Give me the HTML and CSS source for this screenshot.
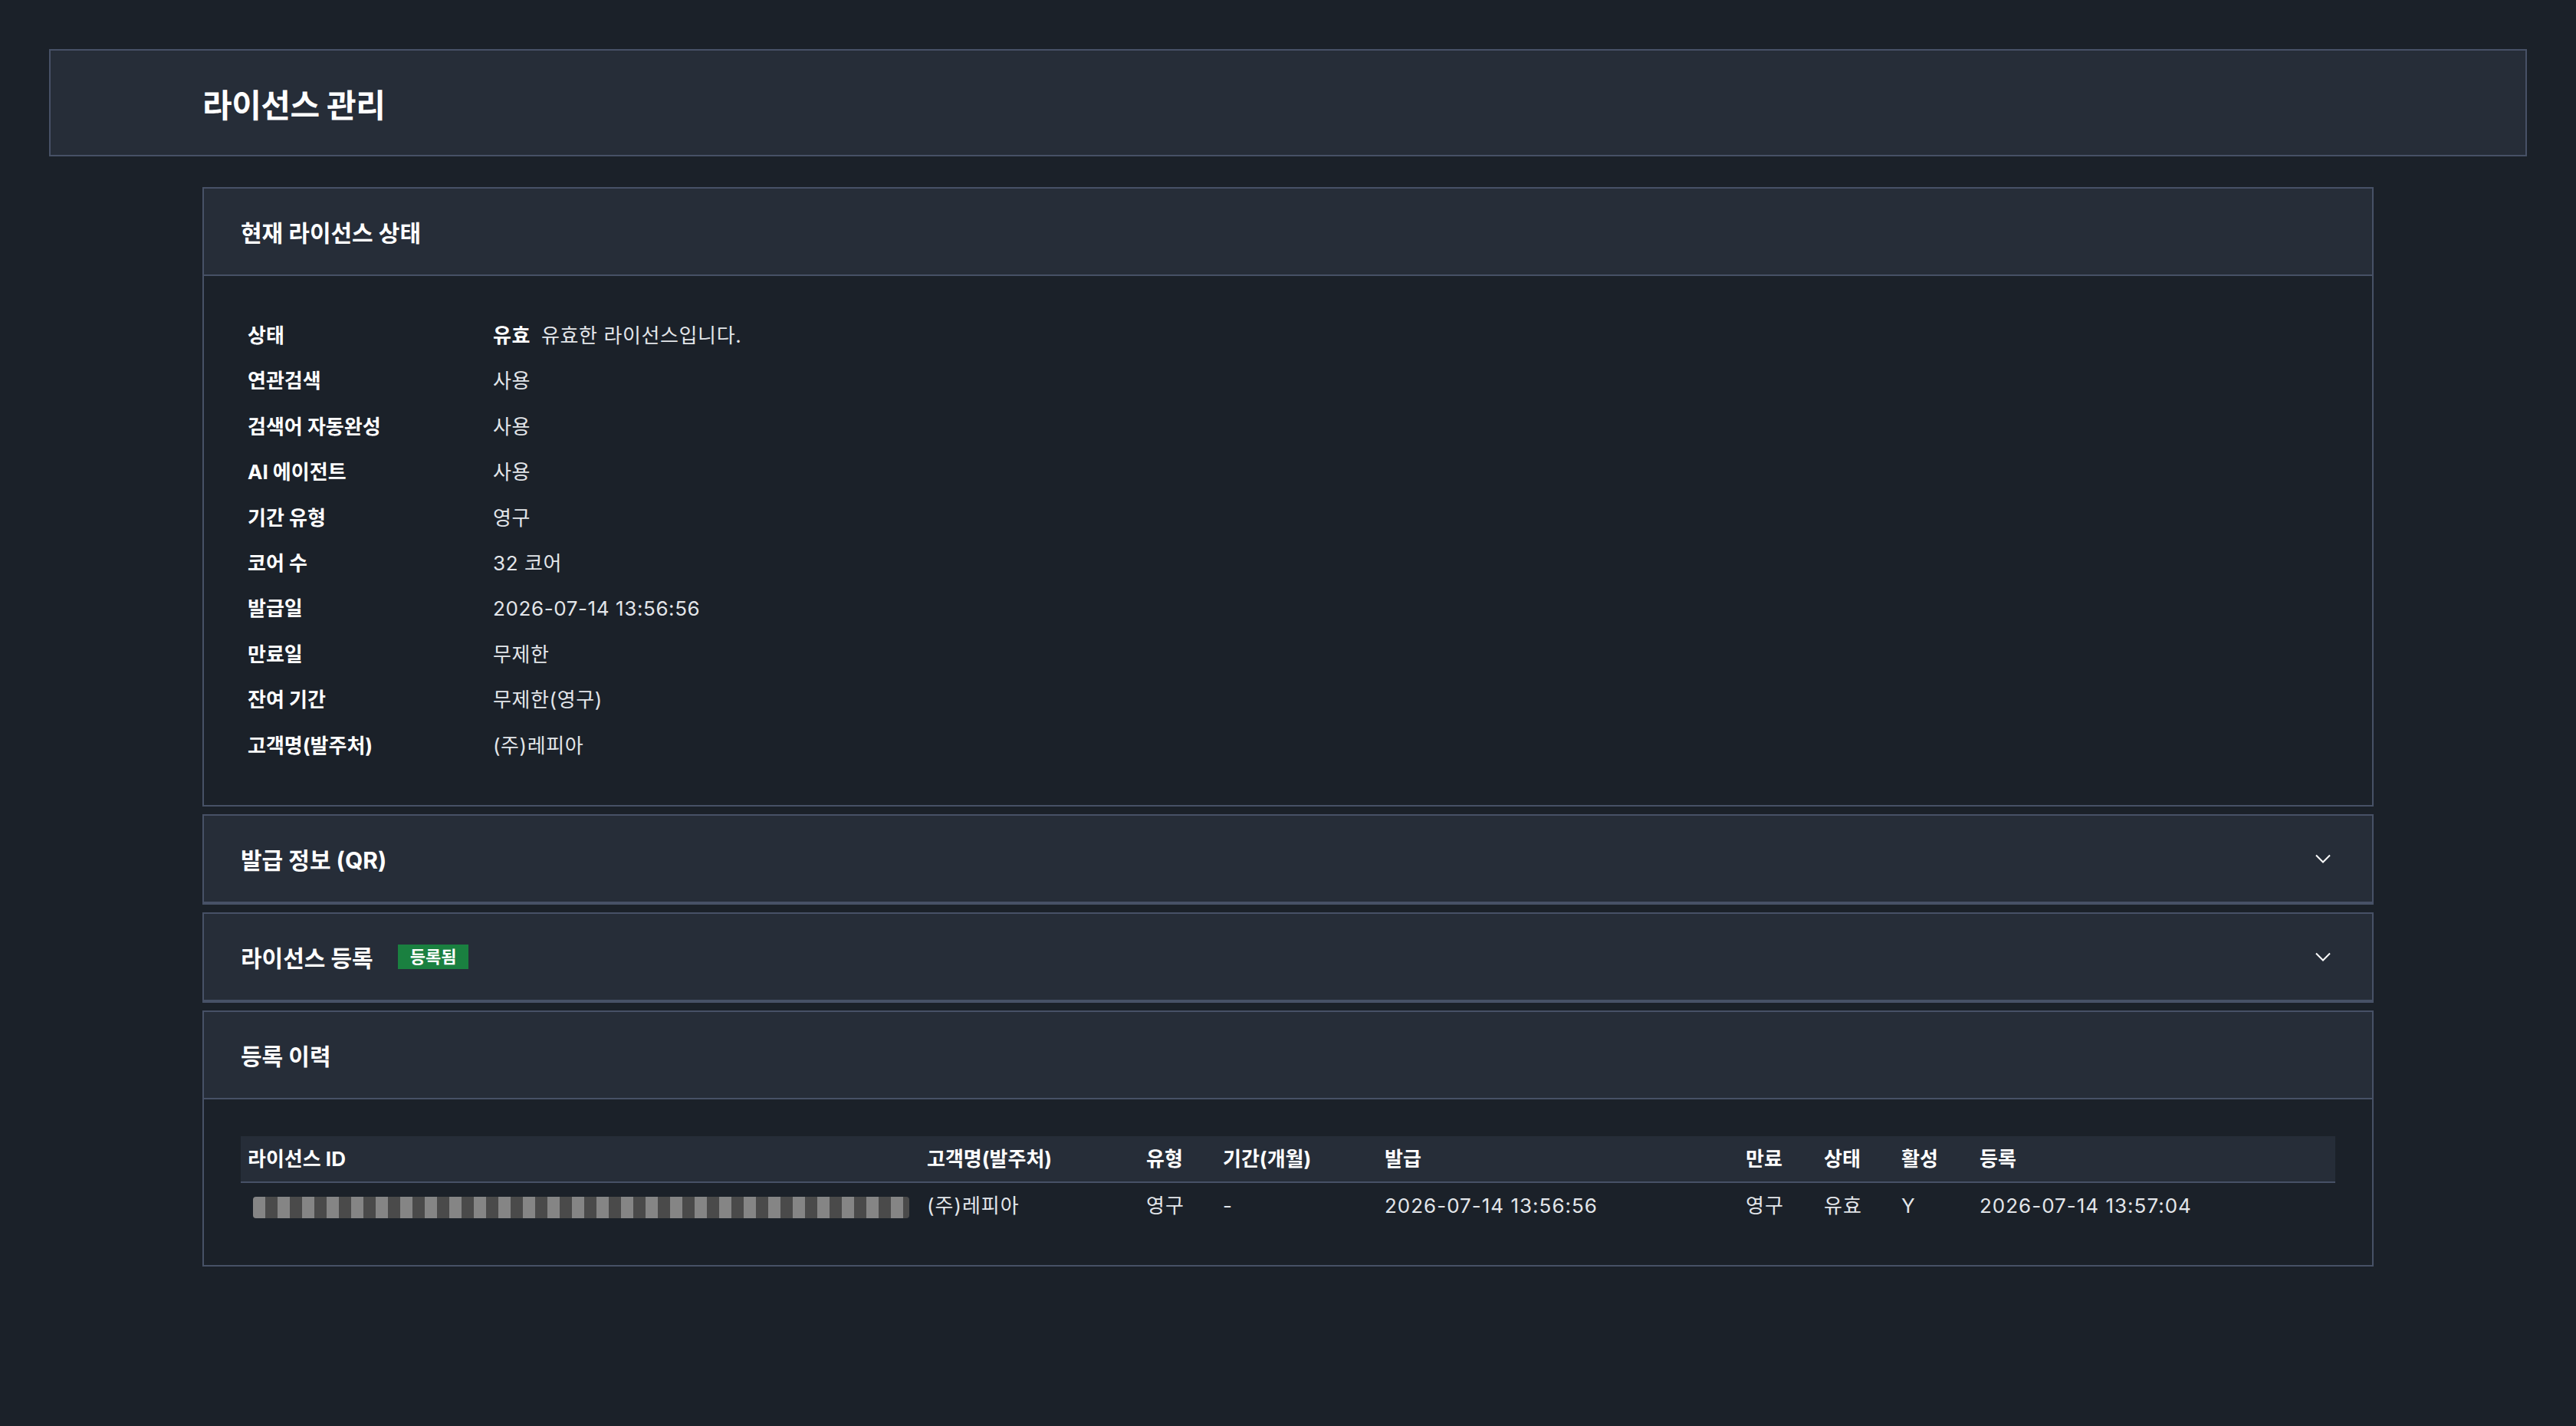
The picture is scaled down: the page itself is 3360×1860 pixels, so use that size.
FILE: index.html
```html
<!DOCTYPE html>
<html lang="ko">
<head>
    <meta charset="UTF-8">
    <meta name="viewport" content="width=device-width, initial-scale=1.0">
    <title>라이선스 관리</title>
    <link rel="stylesheet" href="styles.css">
</head>
<body>
    <header class="page-header">
        <div class="container">
            <h1>라이선스 관리</h1>
        </div>
    </header>

    <main class="container">
        <section class="card">
            <div class="card-head">
                <h2>현재 라이선스 상태</h2>
            </div>
            <div class="card-body">
                <table class="info">
                    <tr><th>상태</th><td><strong>유효</strong><span class="note">유효한 라이선스입니다.</span></td></tr>
                    <tr><th>연관검색</th><td>사용</td></tr>
                    <tr><th>검색어 자동완성</th><td>사용</td></tr>
                    <tr><th>AI 에이전트</th><td>사용</td></tr>
                    <tr><th>기간 유형</th><td>영구</td></tr>
                    <tr><th>코어 수</th><td>32 코어</td></tr>
                    <tr><th>발급일</th><td>2026-07-14 13:56:56</td></tr>
                    <tr><th>만료일</th><td>무제한</td></tr>
                    <tr><th>잔여 기간</th><td>무제한(영구)</td></tr>
                    <tr><th>고객명(발주처)</th><td>(주)레피아</td></tr>
                </table>
            </div>
        </section>

        <section class="card collapsed">
            <div class="card-head">
                <h2>발급 정보 (QR)</h2>
                <svg class="chevron" width="20" height="12" viewBox="0 0 20 12"><polyline points="1,1.5 10,10.5 19,1.5" /></svg>
            </div>
        </section>

        <section class="card collapsed">
            <div class="card-head">
                <h2>라이선스 등록 <span class="badge">등록됨</span></h2>
                <svg class="chevron" width="20" height="12" viewBox="0 0 20 12"><polyline points="1,1.5 10,10.5 19,1.5" /></svg>
            </div>
        </section>

        <section class="card">
            <div class="card-head">
                <h2>등록 이력</h2>
            </div>
            <div class="card-body">
                <table class="history">
                    <colgroup>
                        <col style="width: 886px">
                        <col style="width: 286px">
                        <col style="width: 100px">
                        <col style="width: 211px">
                        <col style="width: 471px">
                        <col style="width: 102px">
                        <col style="width: 101px">
                        <col style="width: 102px">
                        <col>
                    </colgroup>
                    <thead>
                        <tr>
                            <th>라이선스 ID</th>
                            <th>고객명(발주처)</th>
                            <th>유형</th>
                            <th>기간(개월)</th>
                            <th>발급</th>
                            <th>만료</th>
                            <th>상태</th>
                            <th>활성</th>
                            <th>등록</th>
                        </tr>
                    </thead>
                    <tbody>
                        <tr>
                            <td><span class="redacted"></span></td>
                            <td>(주)레피아</td>
                            <td>영구</td>
                            <td>-</td>
                            <td>2026-07-14 13:56:56</td>
                            <td>영구</td>
                            <td>유효</td>
                            <td>Y</td>
                            <td>2026-07-14 13:57:04</td>
                        </tr>
                    </tbody>
                </table>
            </div>
        </section>
    </main>
</body>
</html>
```

FILE: styles.css
```css
body {
    margin: 0;
    padding: 64px;
    background: #1b2129;
    color: #e3e6ea;
    font-family: Inter, "Noto Sans CJK KR", sans-serif;
    font-size: 26px;
}
.container {
    max-width: 2832px;
    margin: 0 auto;
}
.page-header {
    background: #262d38;
    border: 2px solid #475166;
    height: 136px;
    display: flex;
    align-items: center;
    margin-bottom: 40px;
}
.page-header .container {
    width: 100%;
}
.page-header h1 {
    margin: 0;
    font-size: 42px;
    font-weight: 700;
    color: #fff;
    letter-spacing: -0.5px;
}
.card {
    border: 2px solid #475166;
    background: #1b2129;
    margin-bottom: 10px;
}
.card-head {
    height: 112px;
    padding: 0 48px;
    background: #262d38;
    border-bottom: 2px solid #475166;
    display: flex;
    align-items: center;
    justify-content: space-between;
}
.card-head h2 {
    margin: 0;
    font-size: 30px;
    font-weight: 700;
    color: #fff;
    display: flex;
    align-items: center;
}
.chevron {
    margin-right: 6px;
}
.chevron polyline {
    fill: none;
    stroke: #fff;
    stroke-width: 2;
}
.badge {
    margin-left: 32px;
    background: #1a8040;
    color: #fff;
    font-size: 22px;
    font-weight: 700;
    line-height: 32px;
    padding: 0 16px;
}
.card-body {
    padding: 48px;
}
table {
    border-collapse: collapse;
}
.info th,
.info td {
    padding: 12px 9px;
    line-height: 35.4px;
    text-align: left;
    white-space: nowrap;
}
.info th {
    width: 302px;
    color: #fff;
    font-weight: 700;
}
.info td {
    letter-spacing: 0.6px;
}
.info strong {
    color: #fff;
}
.info .note {
    margin-left: 14px;
}
.history {
    width: 100%;
    table-layout: fixed;
}
.history th,
.history td {
    padding: 12px 9px;
    line-height: 35px;
    text-align: left;
    white-space: nowrap;
}
.history td {
    letter-spacing: 1px;
}
.history th {
    background: #262d38;
    border-bottom: 2px solid #475166;
    color: #fff;
    font-weight: 700;
}
.redacted {
    display: inline-block;
    width: 856px;
    height: 28px;
    margin-left: 7px;
    vertical-align: middle;
    border-radius: 4px;
    background: repeating-linear-gradient(90deg, #858585 0 16px, #4a4a4a 16px 32px);
}
```
